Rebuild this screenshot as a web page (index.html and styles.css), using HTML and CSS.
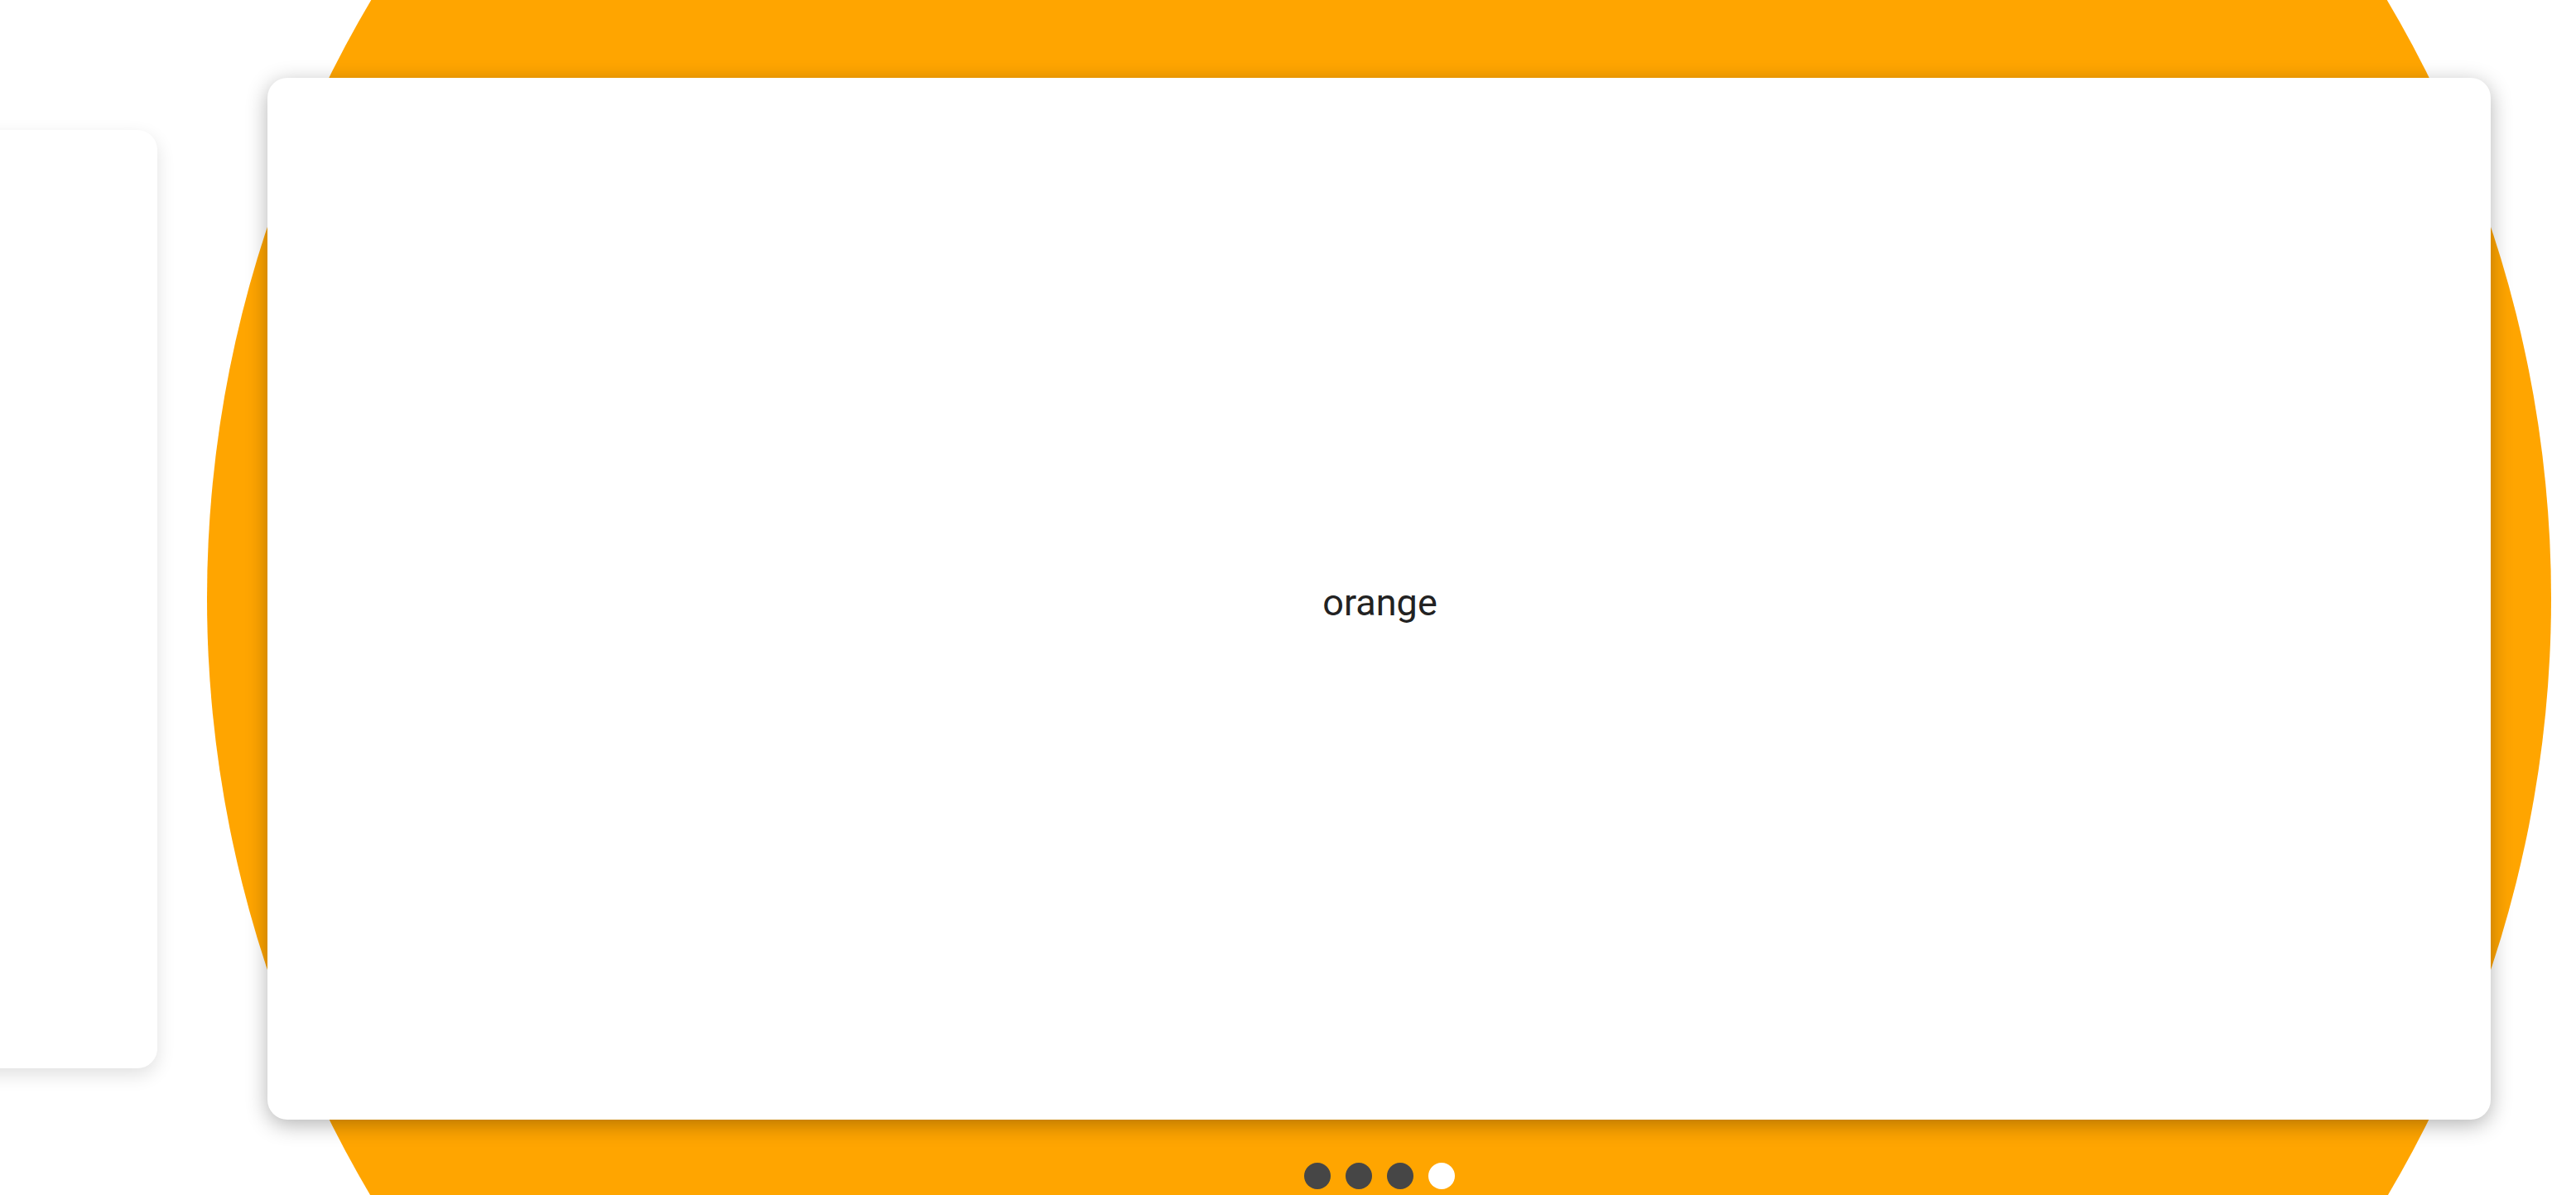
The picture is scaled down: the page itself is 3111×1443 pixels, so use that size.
FILE: index.html
```html
<!DOCTYPE html>
<html lang="en">
<head>
<meta charset="utf-8">
<title>Carousel</title>
<link rel="stylesheet" href="styles.css">
</head>
<body>
<div class="carousel">
  <div class="halo"></div>
  <div class="track">
    <div class="card side"></div>
    <div class="card main"><span class="label">orange</span></div>
  </div>
  <div class="dots">
    <span class="dot"></span>
    <span class="dot"></span>
    <span class="dot"></span>
    <span class="dot active"></span>
  </div>
</div>
</body>
</html>
```

FILE: styles.css
```css
html, body {
  margin: 0;
  padding: 0;
  background: #ffffff;
}

body {
  font-family: Roboto, "Noto Sans", "Liberation Sans", sans-serif;
}

.carousel {
  position: relative;
  width: 3111px;
  height: 1443px;
  overflow: hidden;
}

.halo {
  position: absolute;
  left: 250px;
  top: -693px;
  width: 2831px;
  height: 2831px;
  border-radius: 50%;
  background: #ffa500;
  z-index: 0;
}

.track {
  position: relative;
  z-index: 1;
  display: flex;
  align-items: center;
  gap: 133px;
  padding-top: 94px;
  margin-left: -2226px;
}

.card {
  flex: none;
  background: #ffffff;
  border-radius: 24px;
}

.side {
  width: 2416px;
  height: 1133px;
  box-shadow: 0 8px 22px rgba(0, 0, 0, 0.12);
}

.main {
  width: 2685px;
  height: 1258px;
  display: flex;
  align-items: center;
  justify-content: center;
  box-shadow: 0 6px 26px rgba(0, 0, 0, 0.3);
}

.label {
  font-size: 45px;
  color: #222222;
  padding-top: 8px;
  padding-left: 2px;
}

.dots {
  position: relative;
  z-index: 1;
  margin-left: 323px;
  width: 2685px;
  margin-top: 52px;
  display: flex;
  justify-content: center;
  gap: 18px;
}

.dot {
  width: 32px;
  height: 32px;
  border-radius: 50%;
  background: #464646;
}

.dot.active {
  background: #ffffff;
}
```
